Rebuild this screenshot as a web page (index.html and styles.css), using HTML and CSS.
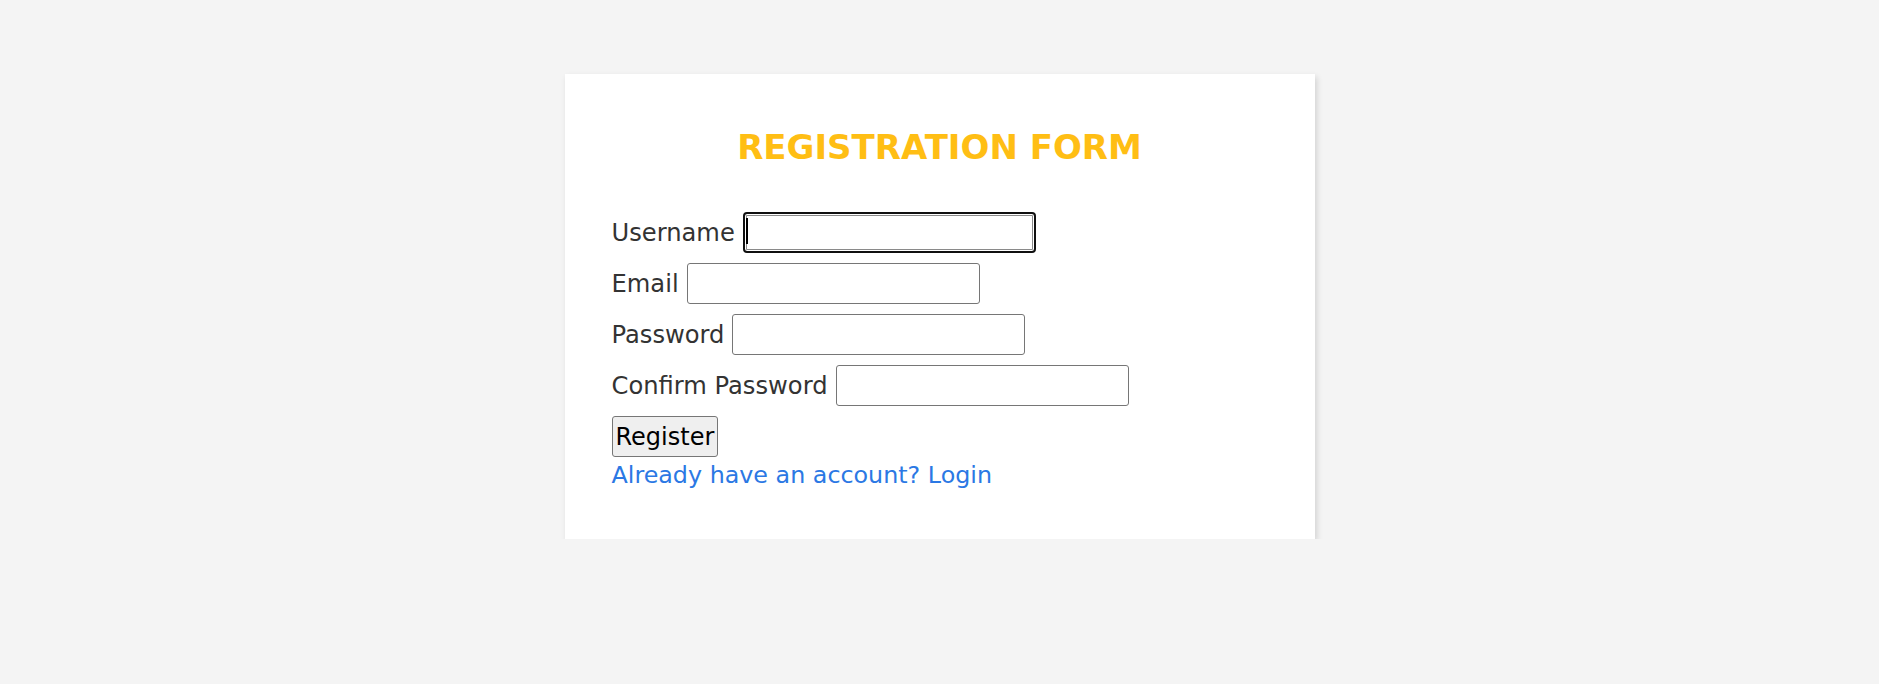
FILE: index.html
```html
<!DOCTYPE html>
<html lang="en">
<head>
<meta charset="utf-8">
<title>Registration Form</title>
<link rel="stylesheet" href="styles.css">
</head>
<body>
  <main class="page">
    <form class="card">
      <h2 class="title">REGISTRATION FORM</h2>
      <div class="fields">
        <div class="row">
          <label class="label" for="username">Username</label>
          <span class="input-wrap">
            <input class="input input-focused" id="username" type="text">
            <span class="caret"></span>
          </span>
        </div>
        <div class="row">
          <label class="label" for="email">Email</label>
          <input class="input" id="email" type="email">
        </div>
        <div class="row">
          <label class="label" for="password">Password</label>
          <input class="input" id="password" type="password">
        </div>
        <div class="row">
          <label class="label" for="confirm">Confirm Password</label>
          <input class="input" id="confirm" type="password">
        </div>
        <div class="row">
          <button class="button" type="button">Register</button>
        </div>
      </div>
      <a class="link" href="#">Already have an account? Login</a>
    </form>
  </main>
</body>
</html>
```

FILE: styles.css
```css
html, body {
  margin: 0;
  padding: 0;
}

body {
  background: #f4f4f4;
  font-family: "DejaVu Sans", "Liberation Sans", sans-serif;
  color: #333333;
}

.page {
  display: flex;
  justify-content: center;
  padding-top: 74px;
}

.card {
  width: 750px;
  box-sizing: border-box;
  background: #ffffff;
  padding: 53px 47px 50px 47px;
  box-shadow: 2px 3px 6px rgba(0, 0, 0, 0.14);
  display: flex;
  flex-direction: column;
}

.title {
  margin: 0 0 45px 0;
  text-align: center;
  font-size: 34px;
  line-height: 40px;
  font-weight: 700;
  color: #ffbe14;
}

.fields {
  display: flex;
  flex-direction: column;
  gap: 10px;
}

.row {
  display: flex;
  align-items: center;
  gap: 8px;
  height: 41px;
}

.label {
  font-size: 24.2px;
  line-height: 28px;
  color: #333333;
}

.input-wrap {
  position: relative;
  display: flex;
}

.input {
  width: 293px;
  height: 41px;
  box-sizing: border-box;
  border: 1px solid #767676;
  border-radius: 3px;
  background: #ffffff;
  margin: 0;
  padding: 0 4px;
  font-family: inherit;
  font-size: 20px;
}

.input-focused {
  border: 2px solid #101010;
  border-radius: 4px;
  box-shadow: inset 0 0 0 1px #ffffff, inset 0 0 0 2px #8a8a8a;
  outline: none;
}

.caret {
  position: absolute;
  left: 3px;
  top: 6px;
  width: 2px;
  height: 26px;
  background: #000000;
}

.button {
  height: 41px;
  box-sizing: border-box;
  padding: 0 3px;
  margin: 0;
  border: 1px solid #767676;
  border-radius: 3px;
  background: #efefef;
  color: #000000;
  font-family: inherit;
  font-size: 24px;
  line-height: 28px;
}

.link {
  margin-top: 4px;
  align-self: flex-start;
  font-size: 23.8px;
  line-height: 28px;
  color: #2b78e4;
  text-decoration: none;
}
```
